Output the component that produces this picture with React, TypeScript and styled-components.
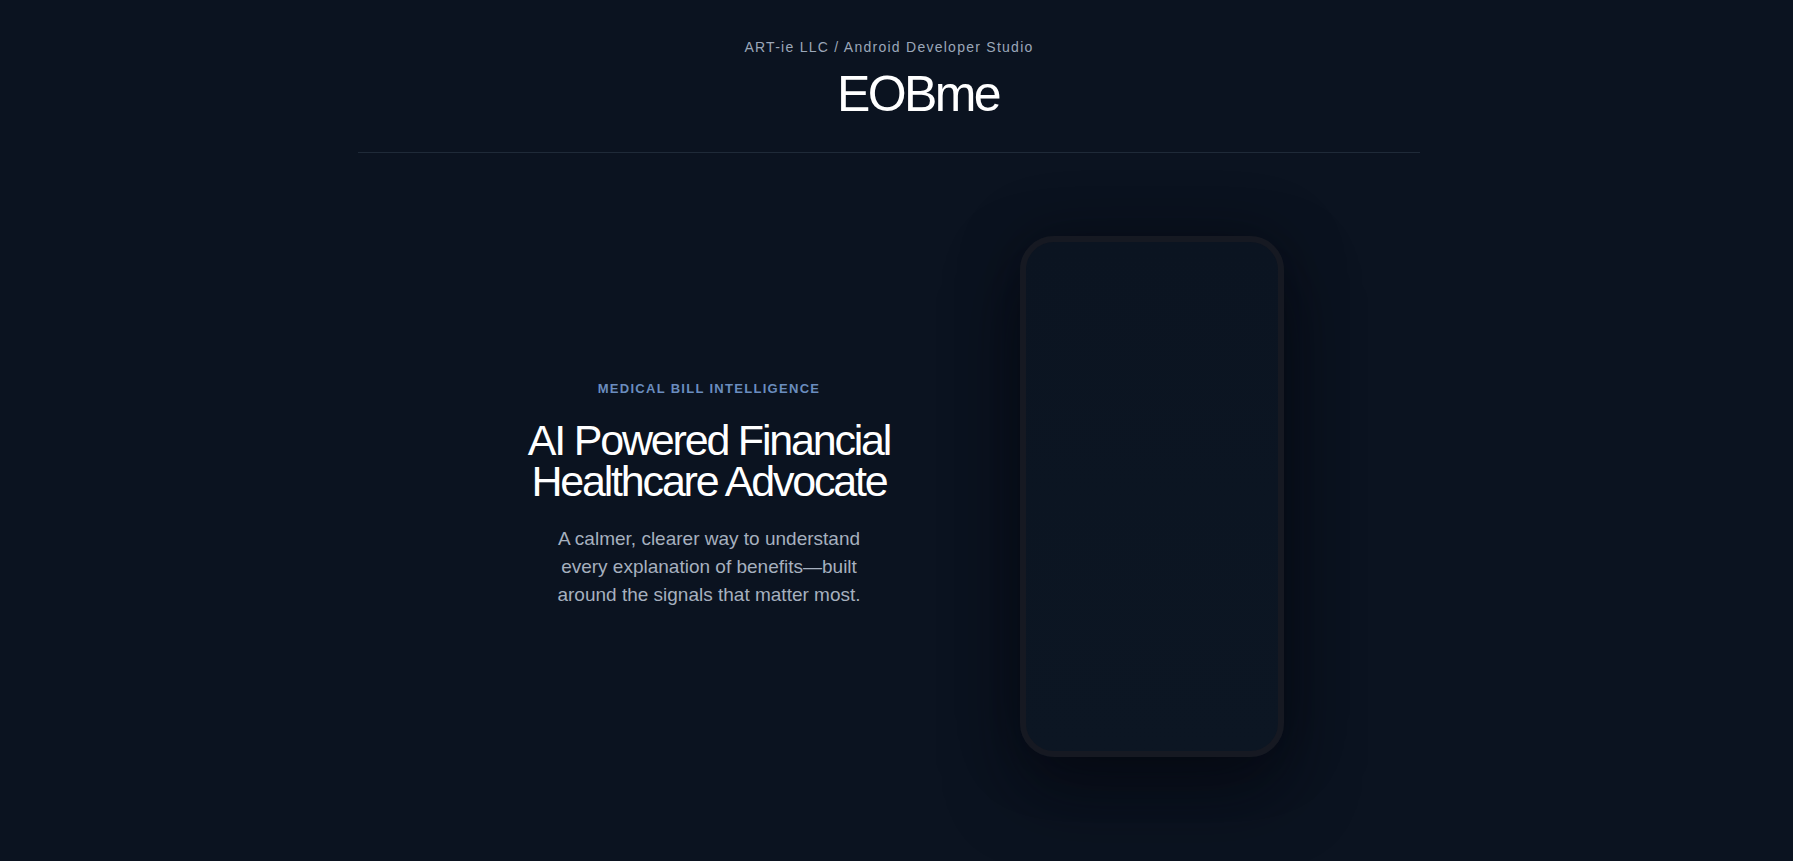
// External Dependencies
import React, { FC } from 'react';
import styled, { createGlobalStyle } from 'styled-components';

// Local Variables
const GlobalStyle = createGlobalStyle`
  html, body {
    margin: 0;
    padding: 0;
    background: #0b1320;
  }

  body {
    color: #ffffff;
    font-family: 'Liberation Sans', Arial, Helvetica, sans-serif;
    -webkit-font-smoothing: antialiased;
  }
`;

const StyledPage = styled.div`
  min-height: 5150px;
  padding-right: 15px;
  background: #0b1320;
`;

const Header = styled.header`
  max-width: 1062px;
  margin: 0 auto;
  padding-top: 39px;
  text-align: center;
`;

const Studio = styled.p`
  margin: 0;
  color: #9ba7b9;
  font-size: 14px;
  line-height: 1.2;
  letter-spacing: 0.09em;
`;

// the wordmark sits a little right of centre in the reference
const Wordmark = styled.h1`
  margin: 13px 0 0;
  padding-left: 58px;
  color: #ffffff;
  font-size: 50px;
  font-weight: 400;
  line-height: 1;
  letter-spacing: -2.6px;
`;

const Divider = styled.hr`
  height: 1px;
  margin: 33px 0 0;
  border: 0;
  background: #1f2a38;
`;

const Hero = styled.section`
  width: 1861px;
  padding-top: 83px;
`;

const HeroGrid = styled.div`
  display: grid;
  grid-template-columns: 443px 443px;
  align-items: center;
  width: 886px;
  margin: 0 auto;
`;

const Copy = styled.div`
  display: flex;
  flex-direction: column;
  align-items: center;
  padding-bottom: 3px;
  text-align: center;
`;

const Eyebrow = styled.span`
  color: #6a8dbf;
  font-size: 13px;
  font-weight: 700;
  line-height: 1.2;
  letter-spacing: 0.1em;
  text-transform: uppercase;
`;

const Headline = styled.h2`
  margin: 23px 0 0;
  color: #ffffff;
  font-size: 43px;
  font-weight: 400;
  line-height: 41px;
  letter-spacing: -2.2px;
`;

const Lede = styled.p`
  max-width: 312px;
  margin: 23px 0 0;
  color: #a6b0bf;
  font-size: 19px;
  line-height: 28px;
`;

const PhoneSlot = styled.div`
  display: flex;
  justify-content: center;
`;

const Phone = styled.div`
  box-sizing: border-box;
  width: 264px;
  height: 521px;
  border: 6px solid #161922;
  border-radius: 34px;
  background: linear-gradient(180deg, #0b1421 0%, #0c1623 100%);
  box-shadow:
    0 34px 70px rgba(3, 6, 12, 0.55),
    0 0 60px rgba(3, 6, 12, 0.35);
`;

// Component Definition
const App: FC = () => (
  <>
    <GlobalStyle />
    <StyledPage>
      <Header>
        <Studio>ART-ie LLC / Android Developer Studio</Studio>
        <Wordmark>EOBme</Wordmark>
        <Divider />
      </Header>

      <Hero>
        <HeroGrid>
          <Copy>
            <Eyebrow>Medical Bill Intelligence</Eyebrow>
            <Headline>
              AI Powered Financial
              <br />
              Healthcare Advocate
            </Headline>
            <Lede>
              A calmer, clearer way to understand every explanation of
              benefits—built around the signals that matter most.
            </Lede>
          </Copy>

          <PhoneSlot>
            <Phone />
          </PhoneSlot>
        </HeroGrid>
      </Hero>
    </StyledPage>
  </>
);

export default App;
